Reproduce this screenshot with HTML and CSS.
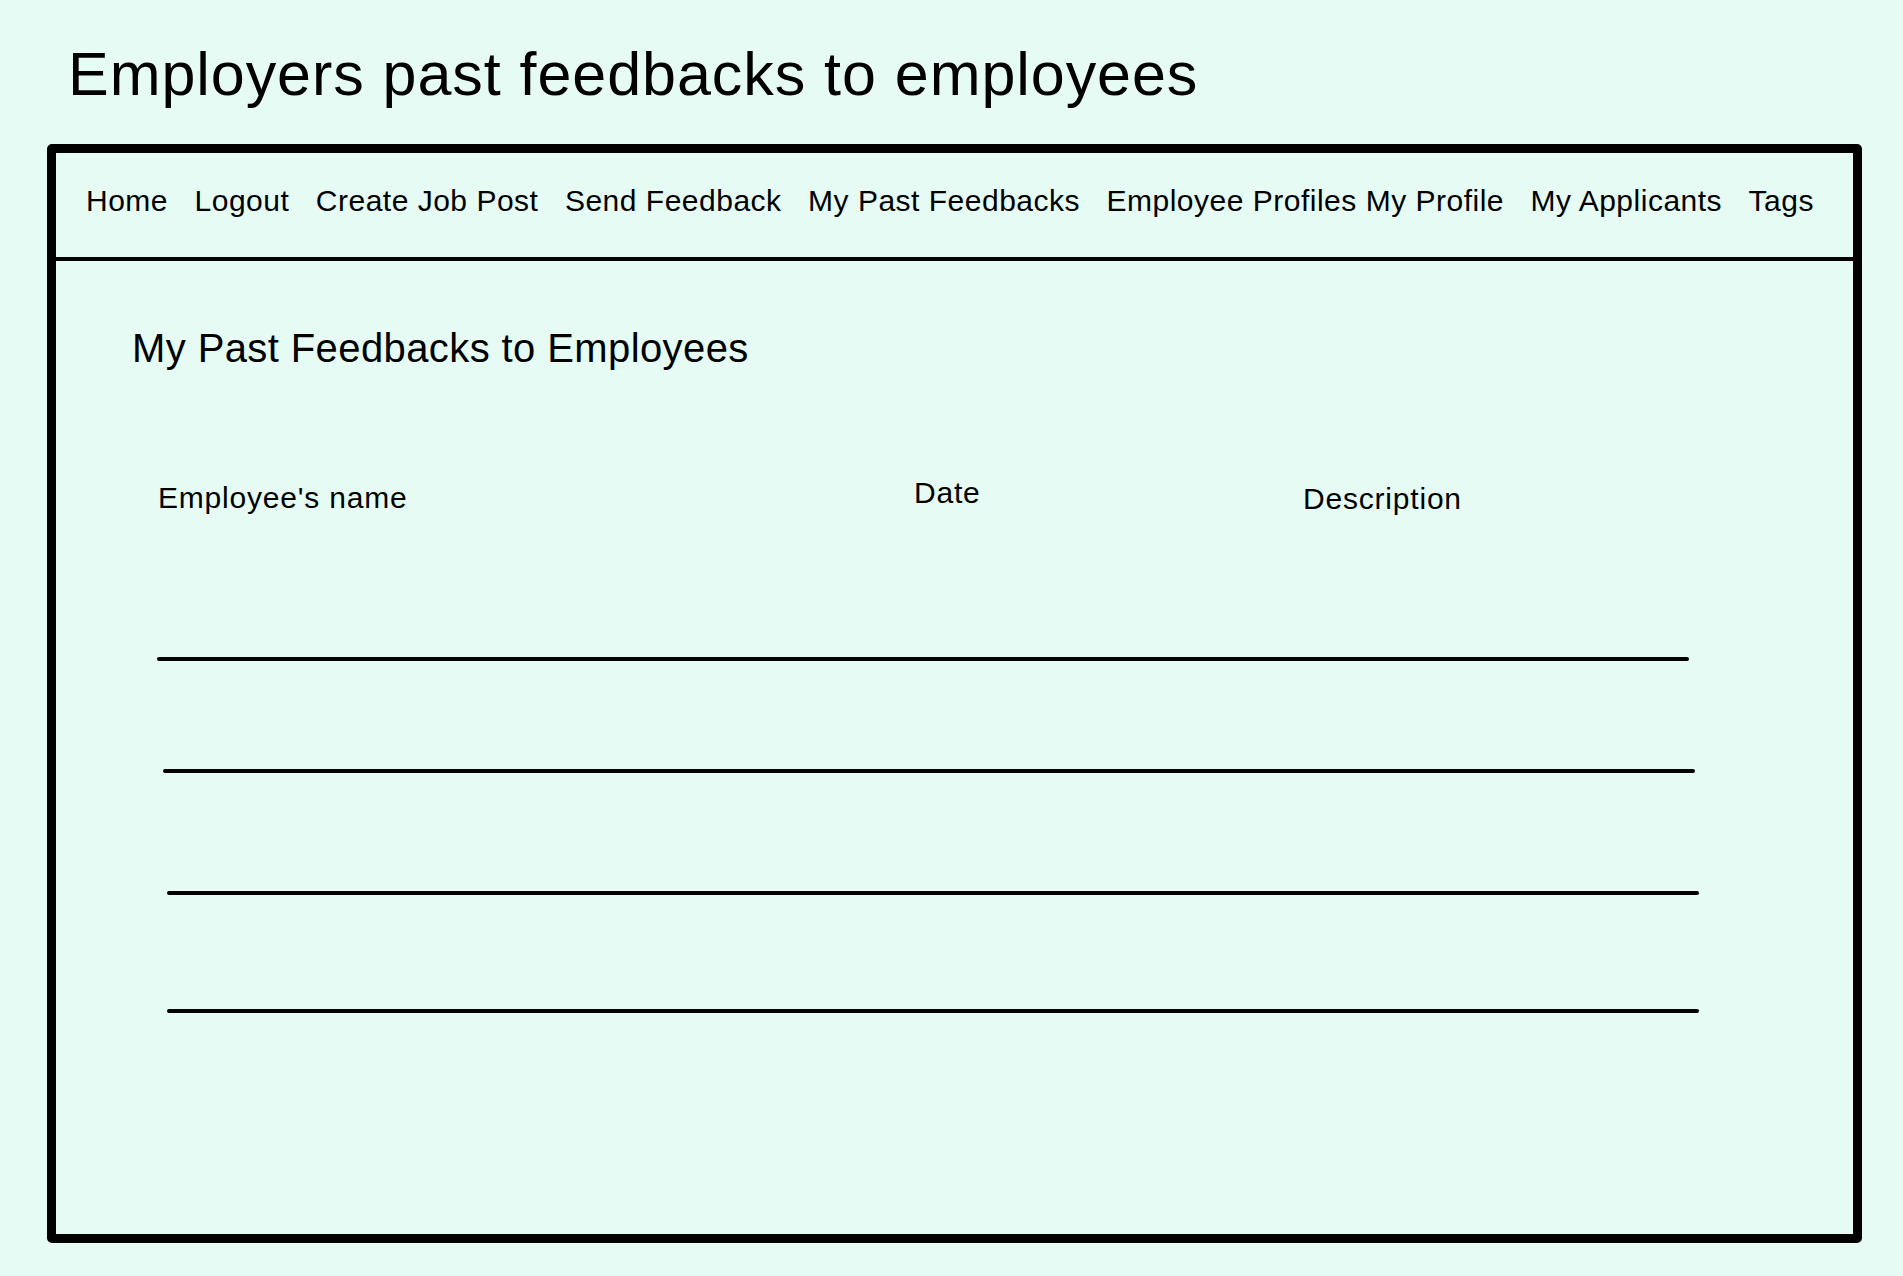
FILE: index.html
```html
<!DOCTYPE html>
<html lang="en">
<head>
  <meta charset="UTF-8">
  <meta name="viewport" content="width=device-width, initial-scale=1.0">
  <title>Employers past feedbacks to employees</title>
  <link rel="stylesheet" href="styles.css">
</head>
<body>
  <h1 class="page-title">Employers past feedbacks to employees</h1>

  <div class="frame">
    <nav class="topnav">
      <a href="#">Home</a>
      <a href="#">Logout</a>
      <a href="#">Create Job Post</a>
      <a href="#">Send Feedback</a>
      <a href="#">My Past Feedbacks</a>
      <span><a href="#">Employee Profiles</a> <a href="#">My Profile</a></span>
      <a href="#">My Applicants</a>
      <a href="#">Tags</a>
    </nav>

    <div class="content">
      <h2 class="section-title">My Past Feedbacks to Employees</h2>

      <div class="table-head">
        <span>Employee's name</span>
        <span class="col-date">Date</span>
        <span class="col-desc">Description</span>
      </div>

      <!-- empty feedback rows -->
      <div class="rows">
        <div class="row-line"></div>
        <div class="row-line"></div>
        <div class="row-line"></div>
        <div class="row-line"></div>
      </div>
    </div>
  </div>
</body>
</html>
```

FILE: styles.css
```css
body {
  margin: 0;
  font-family: "Liberation Sans", Arial, sans-serif;
  background-color: #e5fbf3;
  color: #000;
}

.page-title {
  margin: 44px 0 40px 68px;
  font-size: 61px;
  font-weight: normal;
  line-height: 60px;
  letter-spacing: 0.95px;
}

.frame {
  box-sizing: border-box;
  margin-left: 47px;
  width: 1815px;
  height: 1099px;
  border: 9px solid #000;
  border-radius: 5px;
}

.topnav {
  display: flex;
  gap: 26.5px;
  padding: 33px 0 41px 30px;
  border-bottom: 4px solid #000;
  font-size: 30px;
  line-height: 30px;
  letter-spacing: 0.5px;
}

.topnav a {
  color: #000;
  text-decoration: none;
}

.content {
  padding: 67px 0 0 76px;
}

.section-title {
  margin: 0;
  font-size: 40px;
  font-weight: normal;
  line-height: 40px;
  letter-spacing: 0.4px;
}

.table-head {
  display: grid;
  grid-template-columns: 756px 389px 1fr;
  align-items: start;
  margin: 115px 0 0 26px;
  font-size: 30px;
  line-height: 30px;
  letter-spacing: 0.8px;
}

.col-date {
  margin-top: -5px;
}

.col-desc {
  margin-top: 1px;
}

.rows {
  margin-top: 143px;
}

.row-line {
  width: 1532px;
  height: 4px;
  background-color: #000;
  border-radius: 2px;
  margin-left: 25px;
}

.row-line:nth-child(2) {
  margin-top: 108px;
  margin-left: 31px;
}

.row-line:nth-child(3) {
  margin-top: 118px;
  margin-left: 35px;
}

.row-line:nth-child(4) {
  margin-top: 114px;
  margin-left: 35px;
}
```
